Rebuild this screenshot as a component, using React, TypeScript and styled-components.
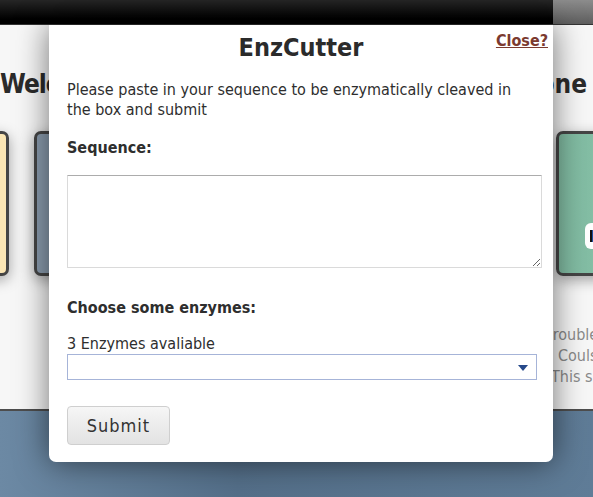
import React from "react";
import styled, { createGlobalStyle } from "styled-components";

const Global = createGlobalStyle`
  html, body { margin: 0; padding: 0; }
  body { font-family: "DejaVu Sans Condensed", "DejaVu Sans", sans-serif; background: #fff; }
  * { box-sizing: border-box; }
`;

const Page = styled.div`
  position: relative;
  width: 593px;
  height: 497px;
  overflow: hidden;
  display: flex;
  flex-direction: column;
`;

const TopBar = styled.div`
  height: 25px;
  flex: none;
  display: flex;
  justify-content: flex-end;
  background: linear-gradient(#262626, #000 80%);
  border-bottom: 1px solid #333;
`;

const NavEnd = styled.div`
  width: 40px;
  background: linear-gradient(#8c8c8c, #5e5e5e);
`;

const Hero = styled.section`
  flex: none;
  height: 386px;
  background: #f7f7f7;
  border-bottom: 2px solid #4d4d4d;
  display: flex;
  flex-direction: column;
`;

const Heading = styled.h1`
  margin: 44px 6px 0 0;
  display: flex;
  justify-content: space-between;
  font-size: 26px;
  font-weight: bold;
  color: #2b2b2b;
  line-height: 30px;
  white-space: nowrap;
`;

const HeadingPart = styled.span<{ $spacing: number }>`
  letter-spacing: ${(p) => p.$spacing}px;
`;

const CardRow = styled.div`
  margin: 32px 0 0 -140px;
  display: flex;
  gap: 25px;
`;

const Card = styled.div<{ $bg: string }>`
  position: relative;
  flex: none;
  width: 149px;
  height: 145px;
  border: 3px solid #454545;
  border-radius: 7px;
  background: ${(p) => p.$bg};
  box-shadow: 0 4px 14px rgba(0, 0, 0, 0.35);
  display: flex;
  align-items: flex-end;
  padding: 0 0 24px 26px;
`;

const CardButton = styled.div`
  height: 26px;
  padding: 0 8px 0 5px;
  border-radius: 6px;
  background: #fff;
  display: flex;
  align-items: center;
  font-size: 13px;
  font-weight: bold;
  color: #1f3f7a;
  &::before {
    content: "";
    width: 5px;
    height: 12px;
    margin-right: 4px;
    background: #1b4fa0;
    border-left: 2px solid #111;
  }
`;

const Notes = styled.div`
  margin-top: 48px;
  display: flex;
  flex-direction: column;
  font-size: 16px;
  line-height: 21px;
  color: #8a8a8a;
  white-space: nowrap;
`;

const NoteLine = styled.div<{ $indent: number }>`
  padding-left: ${(p) => p.$indent}px;
`;

const Footer = styled.footer`
  flex: 1;
  background: linear-gradient(90deg, #6c89a4, #546f89 40%, #5f7c97 100%);
`;

const Modal = styled.div`
  position: absolute;
  left: 49px;
  top: 25px;
  width: 504px;
  height: 437px;
  background: #fff;
  border-radius: 0 0 7px 7px;
  box-shadow: 0 0 32px rgba(0, 0, 0, 0.55);
  padding: 0 18px;
  color: #2e2e2e;
  font-size: 16px;
  display: flex;
  flex-direction: column;
`;

const ModalHeader = styled.div`
  position: relative;
  height: 38px;
  display: flex;
  align-items: flex-end;
  justify-content: center;
`;

const Title = styled.h2`
  margin: 0;
  font-size: 25px;
  font-weight: bold;
  line-height: 30px;
  color: #2b2b2b;
`;

const Close = styled.a`
  position: absolute;
  right: -13px;
  top: 6px;
  font-weight: bold;
  font-size: 16px;
  color: #7b3a2f;
  text-decoration: underline;
  cursor: pointer;
`;

const Intro = styled.p`
  margin: 17px 0 0;
  line-height: 20px;
`;

const Label = styled.h3<{ $top: number }>`
  margin: ${(p) => p.$top}px 0 0;
  font-size: 16px;
  font-weight: bold;
  line-height: 20px;
`;

const TextArea = styled.textarea`
  margin-top: 17px;
  width: 475px;
  height: 93px;
  border: 1px solid #dadada;
  border-top-color: #acacac;
  border-radius: 1px;
  resize: vertical;
  font-family: inherit;
  outline: none;
`;

const Hint = styled.div`
  margin-top: 16px;
  line-height: 20px;
`;

const SelectBox = styled.div`
  width: 470px;
  height: 26px;
  border: 1px solid #a6b4d8;
  display: flex;
  align-items: center;
  justify-content: flex-end;
  padding-right: 8px;
`;

const Arrow = styled.div`
  width: 0;
  height: 0;
  border-left: 5px solid transparent;
  border-right: 5px solid transparent;
  border-top: 6px solid #26498a;
  margin-top: 2px;
`;

const SubmitButton = styled.button`
  margin-top: 26px;
  width: 103px;
  height: 39px;
  border: 1px solid #cfcfcf;
  border-radius: 4px;
  background: linear-gradient(#f6f6f6, #ececec 50%, #e3e3e3);
  font-family: inherit;
  font-size: 18px;
  letter-spacing: 1px;
  color: #333;
  cursor: pointer;
`;

export default function App() {
  return (
    <>
      <Global />
      <Page>
        <TopBar>
          <NavEnd />
        </TopBar>
        <Hero>
          <Heading>
            <HeadingPart $spacing={-1}>Welcome to the</HeadingPart>
            <HeadingPart $spacing={0}>Enzyme Zone</HeadingPart>
          </Heading>
          <CardRow>
            <Card $bg="#fbe6b4" />
            <Card $bg="#8b9daf" />
            <Card $bg="#c9b7d4" />
            <Card $bg="#e6b2a6" />
            <Card $bg="linear-gradient(90deg, #7fb9a0, #95cfb5)">
              <CardButton>Go</CardButton>
            </Card>
          </CardRow>
          <Notes>
            <NoteLine $indent={547}>trouble?</NoteLine>
            <NoteLine $indent={558}>Coulson</NoteLine>
            <NoteLine $indent={551}>This site</NoteLine>
          </Notes>
        </Hero>
        <Footer />
        <Modal>
          <ModalHeader>
            <Title>EnzCutter</Title>
            <Close>Close?</Close>
          </ModalHeader>
          <Intro>
            Please paste in your sequence to be enzymatically cleaved in the box and submit
          </Intro>
          <Label $top={18}>Sequence:</Label>
          <TextArea />
          <Label $top={30}>Choose some enzymes:</Label>
          <Hint>3 Enzymes avaliable</Hint>
          <SelectBox>
            <Arrow />
          </SelectBox>
          <SubmitButton>Submit</SubmitButton>
        </Modal>
      </Page>
    </>
  );
}
